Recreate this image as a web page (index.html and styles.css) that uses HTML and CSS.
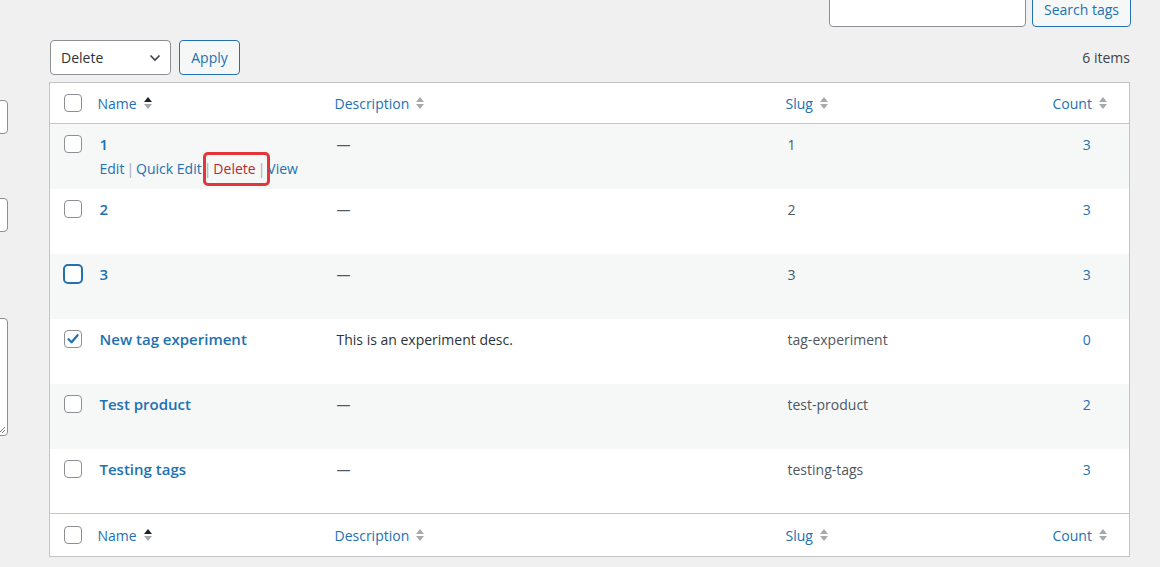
FILE: index.html
```html
<!DOCTYPE html>
<html lang="en">
<head>
  <meta charset="UTF-8" />
  <title>Tags</title>
  <link rel="stylesheet" href="styles.css">
</head>
<body>
  <div class="wrap">

    <!-- Search -->
    <form class="search-box">
      <input type="search" class="search-input" />
      <button type="button" class="button">Search tags</button>
    </form>

    <div class="col-wrap">

      <!-- Add new tag form (mostly off screen) -->
      <div class="col-left">
        <div class="field field-name"></div>
        <div class="field field-slug"></div>
        <div class="field field-desc">
          <svg class="resize" width="8" height="8" viewBox="0 0 8 8">
            <path d="M7 1 L1 7 M7 4 L4 7" stroke="#7a7d80" stroke-width="1" fill="none"/>
          </svg>
        </div>
      </div>

      <!-- Tags list -->
      <div class="col-right">
        <div class="tablenav">
          <div class="bulk-actions">
            <div class="select">
              <span>Delete</span>
              <svg width="12" height="8" viewBox="0 0 12 8">
                <path d="M1.5 1.5 L6 6 L10.5 1.5" stroke="#3c434a" stroke-width="1.6" fill="none"/>
              </svg>
            </div>
            <button type="button" class="button">Apply</button>
          </div>
          <span class="num-items">6 items</span>
        </div>

        <table class="list-table">
          <colgroup>
            <col class="c-cb">
            <col class="c-name">
            <col class="c-desc">
            <col class="c-slug">
            <col class="c-count">
          </colgroup>
          <thead>
            <tr>
              <td class="check-column"><span class="cb"></span></td>
              <th><a href="#">Name <svg class="sort" width="10" height="16" viewBox="0 0 10 16"><path d="M1 7 L5 2 L9 7 Z" fill="#1d2327"/><path d="M1 9 L5 14 L9 9 Z" fill="#a7aaad"/></svg></a></th>
              <th><a href="#">Description <svg class="sort" width="10" height="16" viewBox="0 0 10 16"><path d="M1 7 L5 2 L9 7 Z" fill="#a7aaad"/><path d="M1 9 L5 14 L9 9 Z" fill="#a7aaad"/></svg></a></th>
              <th><a href="#">Slug <svg class="sort" width="10" height="16" viewBox="0 0 10 16"><path d="M1 7 L5 2 L9 7 Z" fill="#a7aaad"/><path d="M1 9 L5 14 L9 9 Z" fill="#a7aaad"/></svg></a></th>
              <th class="num"><a href="#">Count <svg class="sort" width="10" height="16" viewBox="0 0 10 16"><path d="M1 7 L5 2 L9 7 Z" fill="#a7aaad"/><path d="M1 9 L5 14 L9 9 Z" fill="#a7aaad"/></svg></a></th>
            </tr>
          </thead>
          <tbody>
            <tr class="alt">
              <td class="check-column"><span class="cb"></span></td>
              <td>
                <a href="#" class="row-title">1</a>
                <div class="row-actions"><a href="#">Edit</a><span class="sep">|</span><a href="#">Quick Edit</a><span class="sep">|</span><span class="marked"><a href="#" class="delete">Delete</a><span class="sep last">|</span></span><a href="#">View</a></div>
              </td>
              <td class="muted">—</td>
              <td class="muted">1</td>
              <td class="num"><a href="#">3</a></td>
            </tr>
            <tr>
              <td class="check-column"><span class="cb"></span></td>
              <td><a href="#" class="row-title">2</a></td>
              <td class="muted">—</td>
              <td class="muted">2</td>
              <td class="num"><a href="#">3</a></td>
            </tr>
            <tr class="alt">
              <td class="check-column"><span class="cb focus"></span></td>
              <td><a href="#" class="row-title">3</a></td>
              <td class="muted">—</td>
              <td class="muted">3</td>
              <td class="num"><a href="#">3</a></td>
            </tr>
            <tr>
              <td class="check-column">
                <span class="cb checked">
                  <svg width="16" height="16" viewBox="0 0 16 16"><path d="M3.5 8.2 L6.6 11.3 L12.6 4.2" stroke="#2271b1" stroke-width="2.2" fill="none" stroke-linecap="round" stroke-linejoin="round"/></svg>
                </span>
              </td>
              <td><a href="#" class="row-title">New tag experiment</a></td>
              <td class="text">This is an experiment desc.</td>
              <td class="muted">tag-experiment</td>
              <td class="num"><a href="#">0</a></td>
            </tr>
            <tr class="alt">
              <td class="check-column"><span class="cb"></span></td>
              <td><a href="#" class="row-title">Test product</a></td>
              <td class="muted">—</td>
              <td class="muted">test-product</td>
              <td class="num"><a href="#">2</a></td>
            </tr>
            <tr>
              <td class="check-column"><span class="cb"></span></td>
              <td><a href="#" class="row-title">Testing tags</a></td>
              <td class="muted">—</td>
              <td class="muted">testing-tags</td>
              <td class="num"><a href="#">3</a></td>
            </tr>
          </tbody>
          <tfoot>
            <tr>
              <td class="check-column"><span class="cb"></span></td>
              <th><a href="#">Name <svg class="sort" width="10" height="16" viewBox="0 0 10 16"><path d="M1 7 L5 2 L9 7 Z" fill="#1d2327"/><path d="M1 9 L5 14 L9 9 Z" fill="#a7aaad"/></svg></a></th>
              <th><a href="#">Description <svg class="sort" width="10" height="16" viewBox="0 0 10 16"><path d="M1 7 L5 2 L9 7 Z" fill="#a7aaad"/><path d="M1 9 L5 14 L9 9 Z" fill="#a7aaad"/></svg></a></th>
              <th><a href="#">Slug <svg class="sort" width="10" height="16" viewBox="0 0 10 16"><path d="M1 7 L5 2 L9 7 Z" fill="#a7aaad"/><path d="M1 9 L5 14 L9 9 Z" fill="#a7aaad"/></svg></a></th>
              <th class="num"><a href="#">Count <svg class="sort" width="10" height="16" viewBox="0 0 10 16"><path d="M1 7 L5 2 L9 7 Z" fill="#a7aaad"/><path d="M1 9 L5 14 L9 9 Z" fill="#a7aaad"/></svg></a></th>
            </tr>
          </tfoot>
        </table>
      </div>
    </div>
  </div>
</body>
</html>
```

FILE: styles.css
```css
* {
  box-sizing: border-box;
  margin: 0;
  padding: 0;
}

body {
  background: #f0f0f1;
  color: #3c434a;
  font-family: 'Open Sans', 'Noto Sans', sans-serif;
  font-size: 14px;
  overflow: hidden;
}

a {
  color: #2271b1;
  text-decoration: none;
}

.wrap {
  padding-right: 29px;
}

/* Buttons */
.button {
  height: 35px;
  padding: 0 12px;
  background: #f6f7f7;
  border: 1px solid #2271b1;
  border-radius: 4px;
  color: #2271b1;
  font-family: inherit;
  font-size: 14px;
}

/* Search */
.search-box {
  display: flex;
  justify-content: flex-end;
  gap: 6px;
  margin-top: -8px;
}

.search-input {
  width: 197px;
  height: 35px;
  border: 1px solid #8c8f94;
  border-radius: 4px;
  background: #fff;
}

.search-box .button {
  width: 99px;
  padding: 0;
}

/* Columns */
.col-wrap {
  display: flex;
  gap: 41px;
  margin-top: 13px;
}

.col-left {
  width: 8px;
  flex: none;
  overflow: hidden;
  display: flex;
  flex-direction: column;
}

.field {
  width: 108px;
  margin-left: -100px;
  background: #fff;
  border: 1px solid #8c8f94;
  border-radius: 4px;
}

.field-name {
  height: 34px;
  margin-top: 60px;
}

.field-slug {
  height: 34px;
  margin-top: 64px;
}

.field-desc {
  height: 118px;
  margin-top: 86px;
  display: flex;
  align-items: flex-end;
  justify-content: flex-end;
  padding: 0 1px 1px 0;
}

.col-right {
  flex: 1;
}

/* Table nav */
.tablenav {
  display: flex;
  justify-content: space-between;
  align-items: center;
  margin-bottom: 7px;
}

.bulk-actions {
  display: flex;
  gap: 8px;
  margin-left: 1px;
}

.select {
  width: 121px;
  height: 35px;
  display: flex;
  align-items: center;
  justify-content: space-between;
  padding: 0 9px 0 10px;
  background: #fff;
  border: 1px solid #8c8f94;
  border-radius: 4px;
  color: #2c3338;
}

.bulk-actions .button {
  width: 61px;
  padding: 0;
}

.num-items {
  color: #3c434a;
  margin-right: 1px;
}

/* List table */
.list-table {
  width: calc(100% - 1px);
  table-layout: fixed;
  border-collapse: collapse;
  background: #fff;
  border: 1px solid #c3c4c7;
}

.c-cb { width: 40px; }
.c-name { width: 237px; }
.c-desc { width: 451px; }
.c-slug { width: 267px; }
.c-count { width: 85px; }

.list-table thead th, .list-table thead td,
.list-table tfoot th, .list-table tfoot td {
  height: 41px;
  padding: 0 8px;
  text-align: left;
  font-weight: 400;
  vertical-align: middle;
}

.list-table tfoot th, .list-table tfoot td {
  height: 43px;
}

thead tr {
  border-bottom: 1px solid #c3c4c7;
}

tfoot tr {
  border-top: 1px solid #c3c4c7;
}

th a {
  display: inline-flex;
  align-items: center;
  gap: 6px;
}

.sort {
  display: block;
}

tbody tr {
  height: 65px;
}

tbody tr.alt {
  background: #f6f7f7;
}

tbody td {
  padding: 10px 10px 0;
  line-height: 21px;
  vertical-align: top;
}

.list-table thead .check-column,
.list-table tfoot .check-column {
  padding: 0 0 0 14px;
}

.list-table tbody .check-column {
  padding: 11px 0 0 14px;
}

.cb {
  display: block;
  width: 18px;
  height: 18px;
  background: #fff;
  border: 1px solid #8c8f94;
  border-radius: 4px;
}

.cb.checked {
  display: flex;
  align-items: center;
  justify-content: center;
}

.cb.focus {
  width: 20px;
  height: 20px;
  margin: -1px 0 0 -1px;
  border: 2px solid #2271b1;
  border-radius: 5px;
}

.row-title {
  font-weight: 600;
  font-size: 15px;
}

.row-actions {
  padding-top: 3px;
  color: #a7aaad;
}

.row-actions .delete {
  color: #b32d2e;
}

.sep {
  color: #a7aaad;
  margin: 0 2px;
}

.marked {
  position: relative;
}

.marked .sep.last {
  margin: 0 0 0 2px;
}

.marked + a {
  margin-left: 2px;
}

.marked::after {
  content: "";
  position: absolute;
  left: -10px;
  right: -5px;
  top: -7px;
  bottom: -8px;
  border: 3px solid #e2363b;
  border-radius: 5px;
}

.muted {
  color: #50575e;
}

.text {
  color: #2c3338;
}

.num {
  text-align: center;
}

th.num a {
  justify-content: center;
}
```
